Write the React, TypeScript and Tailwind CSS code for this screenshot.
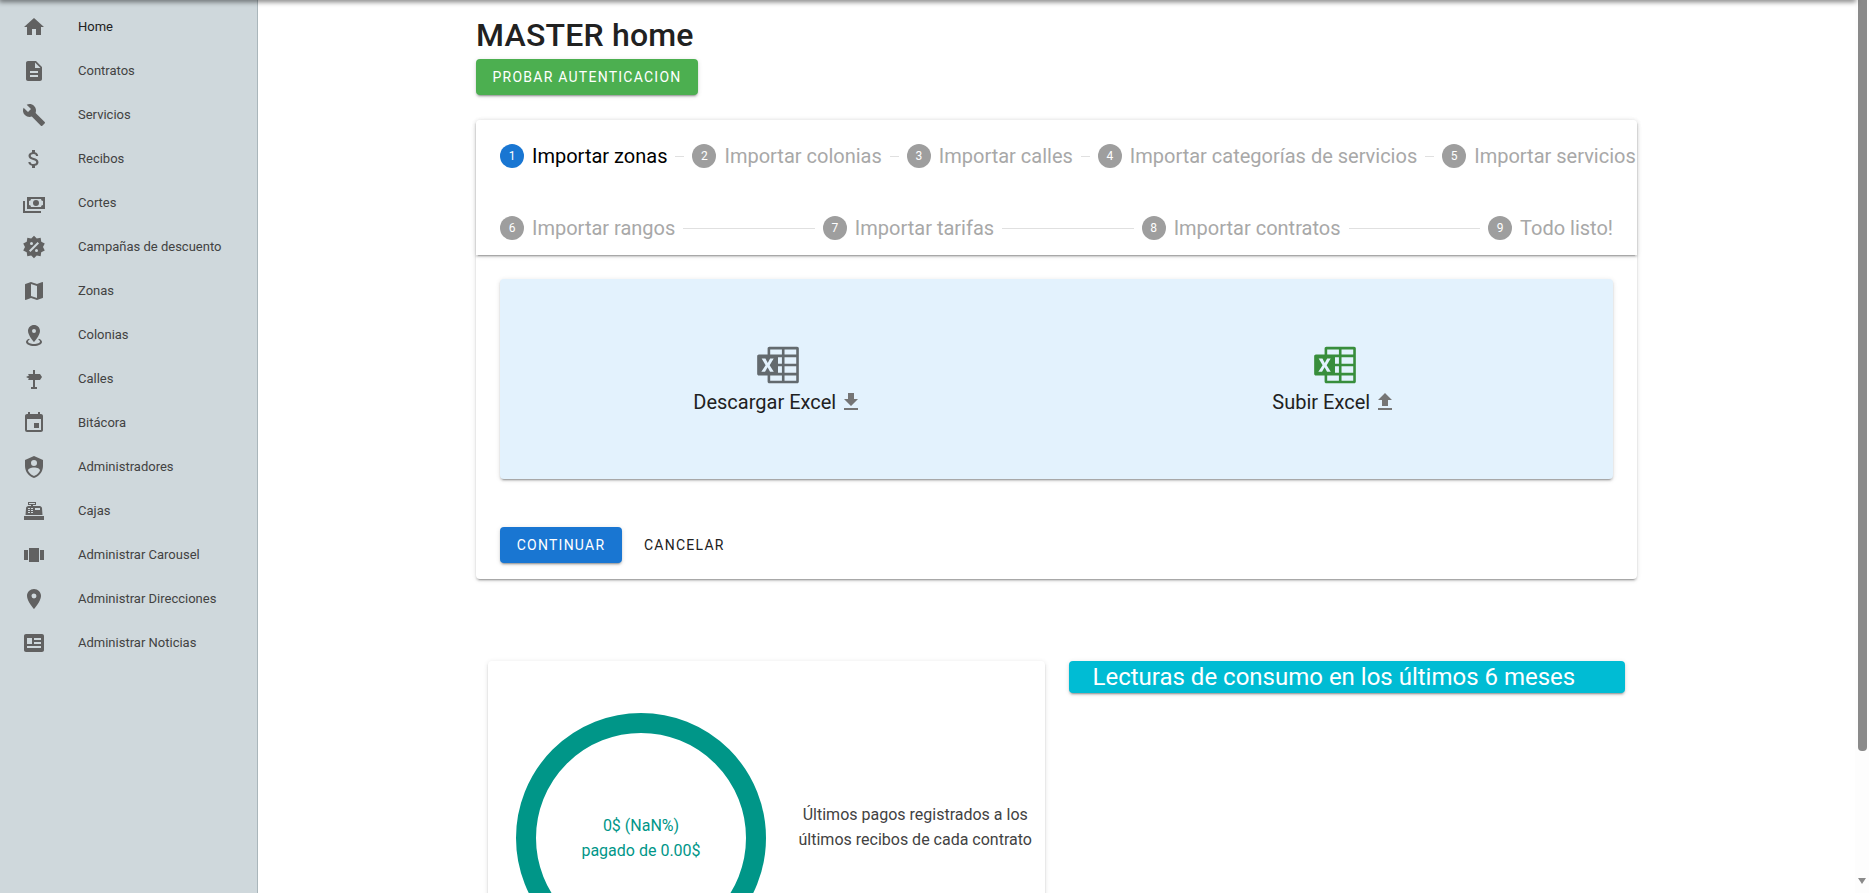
import React from "react";
import {
  MdHome,
  MdDescription,
  MdBuild,
  MdAttachMoney,
  MdMap,
  MdEvent,
  MdViewCarousel,
  MdPlace,
  MdFileDownload,
  MdFileUpload,
} from "react-icons/md";

const elevation =
  "shadow-[0_3px_1px_-2px_rgba(0,0,0,0.2),0_2px_2px_0_rgba(0,0,0,0.14),0_1px_5px_0_rgba(0,0,0,0.12)]";

const MdiIcon = ({ d, size = 24, className = "" }: { d: string; size?: number; className?: string }) => (
  <svg width={size} height={size} viewBox="0 0 24 24" fill="currentColor" className={className}>
    <path fillRule="evenodd" d={d} />
  </svg>
);

const mdi = {
  cash: "M5,6H23V18H5V6M14,9A3,3 0 0,1 17,12A3,3 0 0,1 14,15A3,3 0 0,1 11,12A3,3 0 0,1 14,9M9,8A2,2 0 0,1 7,10V14A2,2 0 0,1 9,16H19A2,2 0 0,1 21,14V10A2,2 0 0,1 19,8H9M1,10H3V20H19V22H1V10Z",
  sale: "M18.65 2.85L19.26 6.71L22.77 8.5L21 12L22.78 15.5L19.24 17.29L18.63 21.15L14.74 20.54L11.97 23.3L9.19 20.5L5.33 21.14L4.71 17.25L1.22 15.47L3 11.97L1.23 8.5L4.74 6.69L5.35 2.86L9.22 3.5L12 .69L14.77 3.46L18.65 2.85M9.5 7A1.5 1.5 0 0 0 8 8.5A1.5 1.5 0 0 0 9.5 10A1.5 1.5 0 0 0 11 8.5A1.5 1.5 0 0 0 9.5 7M14.5 14A1.5 1.5 0 0 0 13 15.5A1.5 1.5 0 0 0 14.5 17A1.5 1.5 0 0 0 16 15.5A1.5 1.5 0 0 0 14.5 14M8.41 17L17 8.41L15.59 7L7 15.59L8.41 17Z",
  marker:
    "M12,2C15.31,2 18,4.66 18,7.95C18,12.41 12,19 12,19C12,19 6,12.41 6,7.95C6,4.66 8.69,2 12,2M12,6A2,2 0 0,0 10,8A2,2 0 0,0 12,10A2,2 0 0,0 14,8A2,2 0 0,0 12,6M20,19C20,21.21 16.42,23 12,23C7.58,23 4,21.21 4,19C4,17.71 5.22,16.56 7.11,15.83L7.75,16.74C6.67,17.19 6,17.81 6,18.5C6,19.88 8.69,21 12,21C15.31,21 18,19.88 18,18.5C18,17.81 17.33,17.19 16.25,16.74L16.89,15.83C18.78,16.56 20,17.71 20,19Z",
  sign: "M11 3H13V7H18L20 10L18 13H13V20H15V22H9V20H11V13H6L7 11.5L4 10L7 8.5L6 7H11Z",
  shield:
    "M12,1L3,5V11C3,16.55 6.84,21.74 12,23C17.16,21.74 21,16.55 21,11V5L12,1M12,5A3,3 0 0,1 15,8A3,3 0 0,1 12,11A3,3 0 0,1 9,8A3,3 0 0,1 12,5M17.13,17C15.92,18.85 14.11,20.24 12,20.92C9.89,20.24 8.08,18.85 6.87,17C6.53,16.5 6.24,16 6,15.47C6,13.82 8.71,12.47 12,12.47C15.29,12.47 18,13.79 18,15.47C17.76,16 17.47,16.5 17.13,17Z",
  register:
    "M2,17H22V21H2V17M6.25,7H9V6H6V3H14V6H11V7H17.8C18.8,7 19.8,8 20,9L20.5,16H3.5L4.05,9C4.05,8 5.05,7 6.25,7M13,9V11H18V9H13M6,9V10H8V9H6M9,9V10H11V9H9M6,11V12H8V11H6M9,11V12H11V11H9M6,13V14H8V13H6M9,13V14H11V13H9M7,4V5H13V4H7Z",
  news: "M20 3H4C2.89 3 2 3.89 2 5V19C2 20.11 2.89 21 4 21H20C21.11 21 22 20.11 22 19V5C22 3.89 21.11 3 20 3M5 7H10V13H5V7M19 17H5V15H19V17M19 13H12V11H19V13M19 9H12V7H19V9Z",
  excel:
    "M21.17 3.25Q21.5 3.25 21.76 3.5 22 3.74 22 4.08V19.92Q22 20.26 21.76 20.5 21.5 20.75 21.17 20.75H7.83Q7.5 20.75 7.24 20.5 7 20.26 7 19.92V17H2.83Q2.5 17 2.24 16.76 2 16.5 2 16.17V7.83Q2 7.5 2.24 7.24 2.5 7 2.83 7H7V4.08Q7 3.74 7.24 3.5 7.5 3.25 7.83 3.25M7 13.06L8.18 15.28H9.97L8 12.06L9.93 8.89H8.22L7.13 10.9L7.09 10.96L7.06 11.03Q6.8 10.5 6.5 9.96 6.25 9.43 5.97 8.89H4.16L6.05 12.08L4 15.28H5.78M13.88 19.5V17H8.25V19.5M13.88 15.75V12.63H12V15.75M13.88 11.38V8.25H12V11.38M13.88 7V4.5H8.25V7M20.75 19.5V17H15.13V19.5M20.75 15.75V12.63H15.13V15.75M20.75 11.38V8.25H15.13V11.38M20.75 7V4.5H15.13V7Z",
};

const menu: { label: string; icon: React.ReactNode; active?: boolean }[] = [
  { label: "Home", icon: <MdHome size={24} />, active: true },
  { label: "Contratos", icon: <MdDescription size={24} /> },
  { label: "Servicios", icon: <MdBuild size={24} /> },
  { label: "Recibos", icon: <MdAttachMoney size={24} /> },
  { label: "Cortes", icon: <MdiIcon d={mdi.cash} /> },
  { label: "Campañas de descuento", icon: <MdiIcon d={mdi.sale} /> },
  { label: "Zonas", icon: <MdMap size={24} /> },
  { label: "Colonias", icon: <MdiIcon d={mdi.marker} /> },
  { label: "Calles", icon: <MdiIcon d={mdi.sign} /> },
  { label: "Bitácora", icon: <MdEvent size={24} /> },
  { label: "Administradores", icon: <MdiIcon d={mdi.shield} /> },
  { label: "Cajas", icon: <MdiIcon d={mdi.register} /> },
  { label: "Administrar Carousel", icon: <MdViewCarousel size={24} /> },
  { label: "Administrar Direcciones", icon: <MdPlace size={24} /> },
  { label: "Administrar Noticias", icon: <MdiIcon d={mdi.news} /> },
];

const Step = ({ n, label, active }: { n: number; label: string; active?: boolean }) => (
  <div className="flex shrink-0 items-center gap-2">
    <span
      className={`flex h-6 w-6 items-center justify-center rounded-full text-xs text-white ${
        active ? "bg-[#1976d2]" : "bg-[#9e9e9e]"
      }`}
    >
      {n}
    </span>
    <span className={`whitespace-nowrap text-xl ${active ? "text-black" : "text-[#a8a8a8]"}`}>{label}</span>
  </div>
);

const Short = () => <div className="mx-2 h-px w-[9px] shrink-0 bg-[#e0e0e0]" />;
const Long = () => <div className="mx-2 h-px flex-1 bg-[#e0e0e0]" />;

export default function App() {
  return (
    <div className="relative flex h-[893px] overflow-hidden bg-white font-['Roboto',sans-serif]">
      <aside className="h-full w-[258px] shrink-0 border-r border-[#aab6bb] bg-[#cfd8dc] pt-[5px]">
        {menu.map((m) => (
          <div key={m.label} className="flex h-11 items-center pl-[22px]">
            <span className="flex w-6 justify-center text-[#616161]">{m.icon}</span>
            <span className={`ml-8 text-[13px] ${m.active ? "text-[#212121]" : "text-[#424242]"}`}>{m.label}</span>
          </div>
        ))}
      </aside>

      <main className="min-w-0 flex-1 pt-[11px]">
        <div className="mx-auto w-[1161px]">
          <h1 className="flex h-12 items-center text-[32px] font-medium tracking-[0.2px] text-[#212121]">
            MASTER home
          </h1>
          <button
            className={`flex h-9 w-[222px] items-center justify-center rounded bg-[#4caf50] text-sm font-normal uppercase tracking-[1.25px] text-white ${elevation}`}
          >
            Probar autenticacion
          </button>

          <section className={`mt-[25px] h-[459px] rounded bg-white ${elevation}`}>
            <div className={`h-[135px] rounded-t bg-white ${elevation}`}>
              <div className="flex h-[72px] items-center pl-6">
                <Step n={1} label="Importar zonas" active />
                <Short />
                <Step n={2} label="Importar colonias" />
                <Short />
                <Step n={3} label="Importar calles" />
                <Short />
                <Step n={4} label="Importar categorías de servicios" />
                <Short />
                <Step n={5} label="Importar servicios" />
              </div>
              <div className="flex h-[72px] items-center px-6">
                <Step n={6} label="Importar rangos" />
                <Long />
                <Step n={7} label="Importar tarifas" />
                <Long />
                <Step n={8} label="Importar contratos" />
                <Long />
                <Step n={9} label="Todo listo!" />
              </div>
            </div>

            <div className="px-6 pt-6">
              <div className={`grid h-[200px] grid-cols-2 rounded bg-[#e3f2fd] ${elevation}`}>
                <div className="flex flex-col items-center pt-[61px]">
                  <MdiIcon d={mdi.excel} size={50} className="text-[#636a6e]" />
                  <div className="-mt-[2px] flex items-center gap-[3px] text-xl text-[#212121]">
                    Descargar Excel
                    <MdFileDownload size={24} className="text-[#757575]" />
                  </div>
                </div>
                <div className="flex flex-col items-center pt-[61px]">
                  <MdiIcon d={mdi.excel} size={50} className="text-[#388e3c]" />
                  <div className="-mt-[2px] flex items-center gap-[3px] text-xl text-[#212121]">
                    Subir Excel
                    <MdFileUpload size={24} className="text-[#757575]" />
                  </div>
                </div>
              </div>

              <div className="mt-12 flex items-center">
                <button
                  className={`h-9 w-[122px] rounded bg-[#1976d2] text-sm font-normal uppercase tracking-[1.25px] text-white ${elevation}`}
                >
                  Continuar
                </button>
                <button className="ml-[22px] h-9 text-sm font-normal uppercase tracking-[1.25px] text-[#212121]">
                  Cancelar
                </button>
              </div>
            </div>
          </section>

          <div className="mt-[82px] grid grid-cols-2 gap-6 px-3">
            <div className={`flex h-[400px] items-start rounded bg-white pl-7 pt-[52px] ${elevation}`}>
              <div className="flex h-[250px] w-[250px] shrink-0 flex-col items-center justify-center rounded-full border-[20px] border-[#009688] text-base leading-[25px] text-[#009688]">
                <span>0$ (NaN%)</span>
                <span>pagado de 0.00$</span>
              </div>
              <p className="mt-[89px] flex-1 pl-5 text-center text-base leading-[25px] text-[#424242]">
                Últimos pagos registrados a los últimos recibos de cada contrato
              </p>
            </div>
            <div className="self-start">
              <div className={`flex h-8 items-center rounded bg-[#00bcd4] pl-6 text-2xl text-white ${elevation}`}>
                Lecturas de consumo en los últimos 6 meses
              </div>
            </div>
          </div>
        </div>
      </main>

      {/* fake window scrollbar */}
      <div className="relative h-full w-[14px] shrink-0 bg-[#fdfdfd]">
        <div className="ml-[3px] h-[751px] w-[9px] rounded-b bg-[#8a8a8a]" />
        <svg width="8" height="6" viewBox="0 0 8 6" className="absolute bottom-[9px] left-[3px] text-[#8a8a8a]">
          <path d="M0 0H8L4 6Z" fill="currentColor" />
        </svg>
      </div>

      {/* app bar shadow from above */}
      <div className="absolute -top-1 left-0 right-[14px] h-1 bg-white shadow-[0_1px_5px_1px_rgba(0,0,0,0.5)]" />
    </div>
  );
}
